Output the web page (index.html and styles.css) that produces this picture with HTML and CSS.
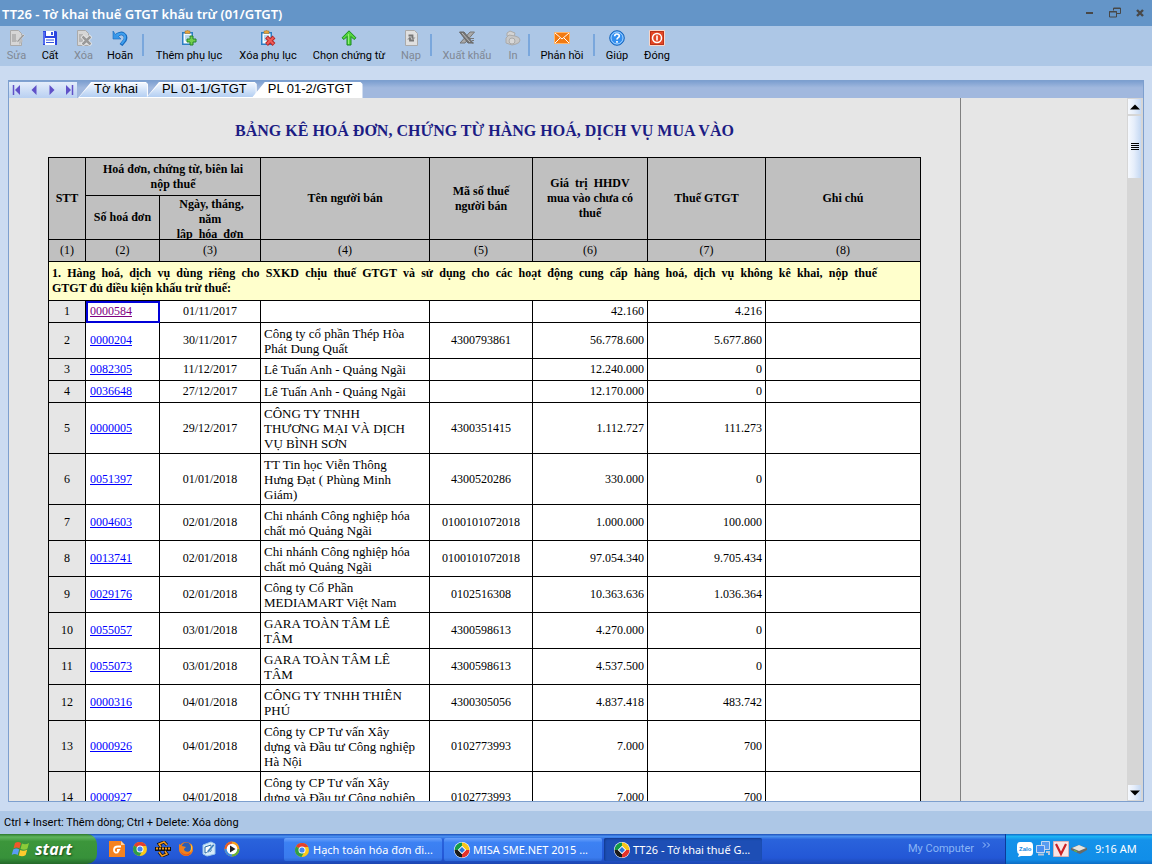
FILE: index.html
```html
<!DOCTYPE html>
<html lang="vi">
<head>
<meta charset="utf-8">
<title>TT26 - Tờ khai thuế GTGT khấu trừ (01/GTGT)</title>
<link rel="stylesheet" href="styles.css">
</head>
<body>
<header class="titlebar">
  <h1 class="titlebar-text">TT26 - Tờ khai thuế GTGT khấu trừ (01/GTGT)</h1>
  <div class="window-controls">
    <button type="button" aria-label="Thu nhỏ"><svg width="12" height="12"><path d="M2 6h7" stroke="#484848" stroke-width="2"/></svg></button>
    <button type="button" aria-label="Khôi phục"><svg width="12" height="12" fill="none" stroke="#484848"><path d="M4.500 3.500V1h7v5.500H7.500M4 1.500h8M.5 4.500h7v5.500h-7zM0 5h8"/></svg></button>
    <button type="button" aria-label="Đóng"><svg width="12" height="12"><path d="M3 3l6 6M9 3L3 9" stroke="#484848" stroke-width="2.400"/></svg></button>
  </div>
</header>
<nav class="toolbar">
  <button type="button" class="tool" disabled>
    <svg width="16" height="16" viewBox="0 0 16 16"><path d="M1.500.5h8l3 3v12h-11z" fill="#d6d6d6" stroke="#aaa"/><path d="M5 10h5V7l4 4-4 4v-3H5z" fill="#bdbdbd"/><path d="M3 4h4v8H3z" fill="#b5b5b5"/><path d="M8 11l6-7 1.500 1.500-6 6.500-2 .5z" fill="#999" stroke="#eee" stroke-width=".5"/></svg>Sửa</button>
  <button type="button" class="tool">
    <svg width="16" height="16" viewBox="0 0 16 16"><path d="M1 1h13l1 1v13H1z" fill="#2a45e0"/><path d="M4 1h8v5H4zM3 8h10v7H3z" fill="#fff"/><path d="M9 2h2v3H9zM4 9.500h8v1H4zM4 12h8v1H4z" fill="#3757dd"/><path d="M2 2v12" stroke="#7a93ff"/></svg>Cất</button>
  <button type="button" class="tool" disabled>
    <svg width="16" height="16" viewBox="0 0 16 16"><path d="M1.500.5h8l3 3v12h-11z" fill="#d6d6d6" stroke="#aaa"/><path d="M3 4h4v8H3z" fill="#b5b5b5"/><path d="M6 6l9 9M15 6l-9 9" stroke="#eee" stroke-width="4"/><path d="M6.500 6.500l8 8M14.500 6.500l-8 8" stroke="#999" stroke-width="2.500"/></svg>Xóa</button>
  <button type="button" class="tool">
    <svg width="16" height="16" viewBox="0 0 16 16"><path d="M5 5.500C10 1 15 5 13 10l-4 5" fill="none" stroke="#1769bd" stroke-width="3.600"/><path d="M1 1v8h8L6.500 6.500 9 3.500 5 3 3.500 4.500z" fill="#3796e8" stroke="#1769bd" stroke-width=".6"/><path d="M5 5.500C10 1 14.500 5 12.500 10l-3 4" fill="none" stroke="#3fa0ef" stroke-width="2"/></svg>Hoãn</button>
  <span class="separator"></span>
  <button type="button" class="tool">
    <svg width="16" height="16" viewBox="0 0 16 16"><path d="M1 2h11v13H1z" fill="#2d7fc4"/><path d="M2.500 3.500h8v10h-8z" fill="#f4fbff"/><path d="M4 1h1.500l1-1 1 1H9v2.500H4z" fill="#e5a43c" stroke="#9b7231" stroke-width=".5"/><path d="M4 6h5M4 8h4M4 10h3" stroke="#7fb5d9"/><path d="M9 6h3v3h3v3h-3v3H9v-3H6V9h3z" fill="#72cf4d" stroke="#23842b"/></svg>Thêm phụ lục</button>
  <button type="button" class="tool">
    <svg width="16" height="16" viewBox="0 0 16 16"><path d="M1 2h11v13H1z" fill="#2d7fc4"/><path d="M2.500 3.500h8v10h-8z" fill="#f4fbff"/><path d="M4 1h1.500l1-1 1 1H9v2.500H4z" fill="#e5a43c" stroke="#9b7231" stroke-width=".5"/><path d="M4 6h5M4 8h4M4 10h3" stroke="#7fb5d9"/><path d="M6.500 7l7.500 7.500M14 7l-7.500 7.500" stroke="#b52727" stroke-width="4"/><path d="M7 7.500l6.500 6.500M13.500 7.500L7 14" stroke="#ef5c58" stroke-width="2"/></svg>Xóa phụ lục</button>
  <button type="button" class="tool">
    <svg width="16" height="16" viewBox="0 0 16 16"><path d="M8 .8l7 7-2 1.700-3-3V15H6V6.500l-3 3-2-1.700z" fill="#55d63d" stroke="#168a1d"/><path d="M7.500 4v10" stroke="#93f179"/></svg>Chọn chứng từ</button>
  <button type="button" class="tool" disabled>
    <svg width="16" height="16" viewBox="0 0 16 16"><path d="M2.500.5h9l3 3v12h-12z" fill="#e0e0e0" stroke="#aaa"/><path d="M5.500 5.500h4v3M11 10.500H7v-3" fill="none" stroke="#777" stroke-width="1.800"/><path d="M6.500 7.500h6L9.500 10.500zM4 9.500h6L7 6.500z" fill="#777" opacity=".7"/></svg>Nạp</button>
  <span class="separator"></span>
  <button type="button" class="tool" disabled>
    <svg width="16" height="16" viewBox="0 0 16 16"><path d="M11 2h4.500L6 13H1z" fill="#aaa" stroke="#777"/><path d="M.5 2H5l9 11H9z" fill="#777" stroke="#666"/><path d="M3 3l8 9" stroke="#bbb"/><path d="M11 8.500h4M13 10.500h2M13 13h2" stroke="#777"/></svg>Xuất khẩu</button>
  <button type="button" class="tool" disabled>
    <svg width="16" height="16" viewBox="0 0 16 16"><path d="M2 3l3-2 5 2-1 4-7-1z" fill="#d4d4d4" stroke="#aaa"/><path d="M1 8l3-3 6 1q5 1 5 4t-4 4l-4 1-6-2z" fill="#c8c8c8" stroke="#aaa"/><circle cx="7" cy="11" r="3" fill="#d8d8d8" stroke="#aaa"/></svg>In</button>
  <span class="separator"></span>
  <button type="button" class="tool">
    <svg width="16" height="16" viewBox="0 0 16 16"><path d="M.5 2.500h15v11H.5z" fill="#f27a12" stroke="#ffb66b"/><path d="M1 3l7 6 7-6M1 13l5-5M15 13l-5-5" fill="none" stroke="#fff"/></svg>Phản hồi</button>
  <span class="separator"></span>
  <button type="button" class="tool">
    <svg width="16" height="16" viewBox="0 0 16 16"><circle cx="8" cy="8" r="7.300" fill="#338ff0" stroke="#1866bb"/><circle cx="8" cy="8" r="6" fill="none" stroke="#a8d5ff"/><path d="M5.700 6.200C5.700 3.300 10.300 3.300 10.300 6c0 1.700-2.300 1.600-2.300 3.500M8 11v1.700" fill="none" stroke="#fff" stroke-width="1.700"/></svg>Giúp</button>
  <button type="button" class="tool">
    <svg width="16" height="16" viewBox="0 0 16 16"><path d="M.5.5h15v15H.5z" fill="#e34624" stroke="#f8d6c9"/><path d="M1.500 1.500h13v13h-13z" fill="none" stroke="#b9321a"/><circle cx="8" cy="8" r="4.500" fill="none" stroke="#fff" stroke-width="1.500"/><path d="M8 5.500v5" stroke="#fff" stroke-width="1.600"/></svg>Đóng</button>
</nav>

<main class="workspace">
  <div class="tabstrip">
    <div class="tab-nav">
      <button type="button" aria-label="Trang đầu"><svg width="10" height="10"><path d="M1.500 0v10" stroke="#6051c8" stroke-width="1.500"/><path d="M8 0v10L3 5z" fill="#6051c8"/></svg></button>
      <button type="button" aria-label="Trang trước"><svg width="10" height="10"><path d="M7.500 0v10l-5-5z" fill="#6051c8"/></svg></button>
      <button type="button" aria-label="Trang sau"><svg width="10" height="10"><path d="M2.500 0v10l5-5z" fill="#6051c8"/></svg></button>
      <button type="button" aria-label="Trang cuối"><svg width="10" height="10"><path d="M8.500 0v10" stroke="#6051c8" stroke-width="1.500"/><path d="M2 0v10l5-5z" fill="#6051c8"/></svg></button>
    </div>
    <div class="tabs" role="tablist">
      <button type="button" class="tab" role="tab"><span>Tờ khai</span></button>
      <button type="button" class="tab" role="tab"><span>PL 01-1/GTGT</span></button>
      <button type="button" class="tab tab-active" role="tab" aria-selected="true"><span>PL 01-2/GTGT</span></button>
    </div>
  </div>
  <div class="viewport">
    <section class="sheet">
      <h2 class="sheet-title">BẢNG KÊ HOÁ ĐƠN, CHỨNG TỪ HÀNG HOÁ, DỊCH VỤ MUA VÀO</h2>
      <table class="ledger">
        <colgroup><col class="w-no"><col class="w-inv"><col class="w-date"><col class="w-seller"><col class="w-tax"><col class="w-value"><col class="w-vat"><col class="w-note"></colgroup>
        <thead>
          <tr class="head-top"><th rowspan="2">STT</th><th colspan="2">Hoá đơn, chứng từ, biên lai<br>nộp thuế</th><th rowspan="2">Tên người bán</th><th rowspan="2">Mã số thuế<br>người bán</th><th rowspan="2">Giá&nbsp; trị&nbsp; HHDV<br>mua vào chưa có<br>thuế</th><th rowspan="2">Thuế GTGT</th><th rowspan="2">Ghi chú</th></tr>
          <tr class="head-sub"><th>Số hoá đơn</th><th><div class="clipped">&nbsp;Ngày, tháng,<br>năm<br>lập&nbsp; hóa&nbsp; đơn</div></th></tr>
          <tr class="head-index"><td>(1)</td><td>(2)</td><td>(3)</td><td>(4)</td><td>(5)</td><td>(6)</td><td>(7)</td><td>(8)</td></tr>
        </thead>
        <tbody>
          <tr class="group"><th colspan="8"><span class="group-line">1. Hàng hoá, dịch vụ dùng riêng cho SXKD chịu thuế GTGT và sử dụng cho các hoạt động cung cấp hàng hoá, dịch vụ không kê khai, nộp thuế</span>GTGT đủ điều kiện khấu trừ thuế:</th></tr>
          <tr class="r1"><td>1</td><td class="current"><a class="visited" href="#">0000584</a></td><td>01/11/2017</td><td></td><td></td><td>42.160</td><td>4.216</td><td></td></tr>
          <tr class="r2"><td>2</td><td><a href="#">0000204</a></td><td>30/11/2017</td><td>Công ty cổ phần Thép Hòa<br>Phát Dung Quất</td><td>4300793861</td><td>56.778.600</td><td>5.677.860</td><td></td></tr>
          <tr class="r1"><td>3</td><td><a href="#">0082305</a></td><td>11/12/2017</td><td>Lê Tuấn Anh - Quảng Ngãi</td><td></td><td>12.240.000</td><td>0</td><td></td></tr>
          <tr class="r1"><td>4</td><td><a href="#">0036648</a></td><td>27/12/2017</td><td>Lê Tuấn Anh - Quảng Ngãi</td><td></td><td>12.170.000</td><td>0</td><td></td></tr>
          <tr class="r3"><td>5</td><td><a href="#">0000005</a></td><td>29/12/2017</td><td>CÔNG TY TNHH<br>THƯƠNG MẠI VÀ DỊCH<br>VỤ BÌNH SƠN</td><td>4300351415</td><td>1.112.727</td><td>111.273</td><td></td></tr>
          <tr class="r3"><td>6</td><td><a href="#">0051397</a></td><td>01/01/2018</td><td>TT Tin học Viễn Thông<br>Hưng Đạt ( Phùng Minh<br>Giám)</td><td>4300520286</td><td>330.000</td><td>0</td><td></td></tr>
          <tr class="r2"><td>7</td><td><a href="#">0004603</a></td><td>02/01/2018</td><td>Chi nhánh Công nghiệp hóa<br>chất mỏ Quảng Ngãi</td><td>0100101072018</td><td>1.000.000</td><td>100.000</td><td></td></tr>
          <tr class="r2"><td>8</td><td><a href="#">0013741</a></td><td>02/01/2018</td><td>Chi nhánh Công nghiệp hóa<br>chất mỏ Quảng Ngãi</td><td>0100101072018</td><td>97.054.340</td><td>9.705.434</td><td></td></tr>
          <tr class="r2"><td>9</td><td><a href="#">0029176</a></td><td>02/01/2018</td><td>Công ty Cổ Phần<br>MEDIAMART Việt Nam</td><td>0102516308</td><td>10.363.636</td><td>1.036.364</td><td></td></tr>
          <tr class="r2"><td>10</td><td><a href="#">0055057</a></td><td>03/01/2018</td><td>GARA TOÀN TÂM LÊ<br>TÂM</td><td>4300598613</td><td>4.270.000</td><td>0</td><td></td></tr>
          <tr class="r2"><td>11</td><td><a href="#">0055073</a></td><td>03/01/2018</td><td>GARA TOÀN TÂM LÊ<br>TÂM</td><td>4300598613</td><td>4.537.500</td><td>0</td><td></td></tr>
          <tr class="r2"><td>12</td><td><a href="#">0000316</a></td><td>04/01/2018</td><td>CÔNG TY TNHH THIÊN<br>PHÚ</td><td>4300305056</td><td>4.837.418</td><td>483.742</td><td></td></tr>
          <tr class="r3"><td>13</td><td><a href="#">0000926</a></td><td>04/01/2018</td><td>Công ty CP Tư vấn Xây<br>dựng và Đầu tư Công nghiệp<br>Hà Nội</td><td>0102773993</td><td>7.000</td><td>700</td><td></td></tr>
          <tr class="r3"><td>14</td><td><a href="#">0000927</a></td><td>04/01/2018</td><td>Công ty CP Tư vấn Xây<br>dựng và Đầu tư Công nghiệp<br>Hà Nội</td><td>0102773993</td><td>7.000</td><td>700</td><td></td></tr>
        </tbody>
      </table>
    </section>
    <div class="scrollbar">
      <button type="button" class="scroll-arrow" aria-label="Cuộn lên"><svg width="10" height="6"><path d="M0 5.500L5 .5l5 5z"/></svg></button>
      <div class="scroll-thumb"><svg width="8" height="8"><path d="M0 .5h8M0 2.500h8M0 4.500h8M0 6.500h8" stroke="#000"/></svg></div>
      <button type="button" class="scroll-arrow scroll-down" aria-label="Cuộn xuống"><svg width="10" height="6"><path d="M0 .5L5 5.500l5-5z"/></svg></button>
    </div>
  </div>
</main>

<div class="statusbar">Ctrl + Insert: Thêm dòng; Ctrl + Delete: Xóa dòng</div>

<footer class="taskbar">
  <button type="button" class="start">
    <svg width="19" height="18" viewBox="0 0 19 18"><path d="M4 3c2-1.500 4-1.500 6 0L8.500 8.500C6.500 7 4.500 7 2.500 8.500z" fill="#f0582a"/><path d="M11 3.500c2 1 4.500 1 7-.5l-1.500 5.500c-2 1.500-4.500 1.500-7 .5z" fill="#8ccc39"/><path d="M2.200 9.500c2-1.500 4-1.500 6 0L6.700 15c-2-1.500-4-1.500-6 0z" fill="#5b9cf4"/><path d="M9.200 10c2 1 4.500 1 7-.5L14.700 15c-2 1.500-4.500 1.500-7 .5z" fill="#ffca2d"/></svg>start</button>
  <div class="quick-launch">
    <button type="button" aria-label="Foxit"><svg width="16" height="16" viewBox="0 0 16 16"><path d="M0 0h12l4 4v12H0z" fill="#f58220"/><path d="M12 0v4h4z" fill="#ffd19e"/><path d="M12 5.500H9C6 5.500 5 7 5 9s1.500 3 3.500 2.500L10 9H8" fill="none" stroke="#fff" stroke-width="1.800"/></svg></button>
    <button type="button" aria-label="Chrome"><svg width="16" height="16" viewBox="0 0 16 16"><circle cx="8" cy="8" r="7" fill="#fbc91b"/><path d="M8 8L2 4.400A7 7 0 0 1 14.200 5H8z" fill="#e3402f"/><path d="M8 8L2 4.400A7 7 0 0 0 7.500 15l3-5.500z" fill="#2f9e48"/><circle cx="8" cy="8" r="3.500" fill="#fff"/><circle cx="8" cy="8" r="2.600" fill="#4285f4"/></svg></button>
    <button type="button" aria-label="Unikey"><svg width="16" height="16" viewBox="0 0 16 16"><path d="M0 6h16v4H0z" fill="#111"/><path d="M1 7.500h14" stroke="#f39b20" stroke-width="2" stroke-dasharray="2 1"/><path d="M12 4L9 1 4 3l2 3M4 11l3 4 5-2-2-3" fill="none" stroke="#111" stroke-width="3"/><path d="M12 4L9 1 4 3l2 3M4 11l3 4 5-2-2-3" fill="none" stroke="#f39b20" stroke-width="1.500"/></svg></button>
    <button type="button" aria-label="Firefox"><svg width="16" height="16" viewBox="0 0 16 16"><circle cx="8" cy="8" r="7" fill="#ef7a1a"/><circle cx="8.500" cy="6.500" r="5" fill="#2a5fb8"/><path d="M1 3l3 2 4 1-2 2c0 3 5 4 7 1 1-3-1-5-2-7 5 2 5 7 2 11-3 3-9 2-11-2-1-3-1-5-1-8z" fill="#f0801c"/><path d="M2 9c2 5 8 6 11 2-1 5-9 5-11-2z" fill="#e2491f"/><path d="M13 3c2 3 1 7-1 8 1-2 1-5 1-8z" fill="#ffcf3b"/></svg></button>
    <button type="button" aria-label="Màn hình nền"><svg width="16" height="16" viewBox="0 0 16 16"><path d="M2 4l8-3 4 2v10l-8 2-4-2z" fill="#d6ebf9" stroke="#9cc8ea"/><path d="M4 6l6-2v6l-6 2z" fill="#fff" stroke="#2c6da5"/><path d="M6 10l6-7 2 1-6 7-2 1z" fill="#3a7fc0" stroke="#fff" stroke-width=".5"/></svg></button>
    <button type="button" aria-label="Media Player"><svg width="16" height="16" viewBox="0 0 16 16"><circle cx="8" cy="8" r="7.500" fill="#f5a21e"/><path d="M8 8V.5A7.500 7.500 0 0 0 .5 8z" fill="#e35d2a"/><path d="M8 8v7.500A7.500 7.500 0 0 1 .5 8z" fill="#3d8ce0"/><path d="M8 8v7.500A7.500 7.500 0 0 0 15.500 8z" fill="#68af36"/><circle cx="8" cy="8" r="5.300" fill="#fff"/><path d="M6 4.500v7L11.500 8z" fill="#222"/></svg></button>
  </div>
  <div class="tasks">
    <button type="button" class="task"><svg width="16" height="16" viewBox="0 0 16 16"><circle cx="8" cy="8" r="7" fill="#fbc91b"/><path d="M8 8L2 4.400A7 7 0 0 1 14.200 5H8z" fill="#e3402f"/><path d="M8 8L2 4.400A7 7 0 0 0 7.500 15l3-5.500z" fill="#2f9e48"/><circle cx="8" cy="8" r="3.500" fill="#fff"/><circle cx="8" cy="8" r="2.600" fill="#4285f4"/></svg>Hạch toán hóa đơn đi...</button>
    <button type="button" class="task"><svg width="16" height="16" viewBox="0 0 16 16"><circle cx="8" cy="8" r="8" fill="#fff"/><path d="M8 .5A7.500 7.500 0 0 0 .5 8H4l4-4z" fill="#139b45"/><path d="M8 .5A7.500 7.500 0 0 1 15.500 8H12L8 4z" fill="#f6c51a"/><path d="M15.500 8A7.500 7.500 0 0 1 8 15.500V12l4-4z" fill="#e4322b"/><path d="M8 15.500A7.500 7.500 0 0 1 .5 8H4l4 4z" fill="#1b1b1b"/><path d="M8 4l4 4-4 4-4-4z" fill="#fff"/><path d="M8 5L11 8 8 11 5 8z" fill="#2878d8"/></svg>MISA SME.NET 2015 ...</button>
    <button type="button" class="task task-active"><svg width="16" height="16" viewBox="0 0 16 16"><circle cx="8" cy="8" r="8" fill="#fff"/><path d="M8 .5A7.500 7.500 0 0 0 .5 8H4l4-4z" fill="#139b45"/><path d="M8 .5A7.500 7.500 0 0 1 15.500 8H12L8 4z" fill="#f6c51a"/><path d="M15.500 8A7.500 7.500 0 0 1 8 15.500V12l4-4z" fill="#e4322b"/><path d="M8 15.500A7.500 7.500 0 0 1 .5 8H4l4 4z" fill="#1b1b1b"/><path d="M8 4l4 4-4 4-4-4z" fill="#fff"/><path d="M8 5L11 8 8 11 5 8z" fill="#2878d8"/></svg>TT26 - Tờ khai thuế G...</button>
  </div>
  <div class="desk-band"><span>My Computer</span><svg width="9" height="6"><path d="M1 .5L3.500 3 1 5.500M5 .5L7.500 3 5 5.500" fill="none" stroke="#9dc4fb"/></svg></div>
  <div class="tray">
    <svg width="16" height="16" viewBox="0 0 16 16"><path d="M3 1h10q3 0 3 4v6q0 4-3 4H4l-3 1 1-3Q0 12 0 9V5q0-4 3-4z" fill="#fff"/><text x="2" y="10" class="tray-zalo">Zalo</text></svg>
    <svg width="16" height="16" viewBox="0 0 16 16"><path d="M6.500.5h8v8h-8z" fill="#5a9df0" stroke="#c4d8f0"/><path d="M1.500 4.500h8v7h-8z" fill="#4a8ff0" stroke="#c4d8f0"/><path d="M3 13.500h6M11 11h3v3" stroke="#b9c6d8" stroke-width="2" fill="none"/></svg>
    <svg width="16" height="16" viewBox="0 0 16 16"><path d="M.5.5h15v15H.5z" fill="#f7e6e6" stroke="#d8b4b4"/><path d="M3 3l5 10 5-10" fill="none" stroke="#c92227" stroke-width="2.200"/></svg>
    <svg width="16" height="16" viewBox="0 0 16 16"><path d="M0 7l8-3 8 3v2l-7 4-9-4z" fill="#6a6a66"/><path d="M1 7l7-3 7 3-7 3z" fill="#e4e4e0"/><path d="M3 9.500l3 1" stroke="#65c844"/></svg>
    <span class="clock">9:16 AM</span>
  </div>
</footer>
</body>
</html>
```
FILE: styles.css
```css
* { box-sizing: border-box; }
body {
  margin: 0;
  height: 100vh;
  display: flex;
  flex-direction: column;
  overflow: hidden;
  background: #cbdbf1;
  color: #000;
  font: 11px/14px "Noto Sans", sans-serif;
}
button {
  margin: 0;
  padding: 0;
  border: 0;
  background: none;
  color: inherit;
  font: inherit;
}
svg { flex: none; display: block; }

.titlebar {
  flex: none;
  height: 26px;
  display: flex;
  align-items: center;
  justify-content: space-between;
  padding: 0 6px 0 2px;
  background: #6495c8;
}
.titlebar-text {
  margin: 0;
  padding-top: 2px;
  color: #fff;
  font-size: 13px;
  font-weight: 600;
  line-height: 18px;
}
.window-controls { display: flex; gap: 13px; }

.toolbar {
  flex: none;
  height: 40px;
  display: grid;
  grid-template-columns: 33px 34px 33px 40px 6px 86px 72px 90px 34px 6px 66px 26px 6px 60px 4px 42px 38px;
  padding-top: 4px;
  background: #adc7e6;
}
.toolbar, .statusbar { font-family: Roboto, "Noto Sans", sans-serif; }
.tool {
  display: flex;
  flex-direction: column;
  align-items: center;
  gap: 3px;
  height: 34px;
  white-space: nowrap;
}
.tool:disabled { color: #808894; }
.separator {
  justify-self: center;
  width: 2px;
  height: 22px;
  margin-top: 4px;
  background: #7aa7dc;
}

.workspace {
  flex: 1;
  min-height: 0;
  display: flex;
  flex-direction: column;
  margin: 14px 8px 9px;
  border: 1px solid #7d9fce;
}
.tabstrip {
  flex: none;
  height: 17px;
  display: flex;
  align-items: flex-end;
  background: linear-gradient(#7c9fd0, #a1b8de 40%);
}
.tab-nav {
  display: flex;
  align-items: center;
  justify-content: space-between;
  width: 68px;
  height: 16px;
  padding: 0 3px;
  background: linear-gradient(#e4edfb, #b9d0f1);
}
.tabs { display: flex; padding-left: 1px; font: 13px/14px "Liberation Sans", sans-serif; }
.tab {
  position: relative;
  height: 16px;
  padding: 0 10px 2px 16px;
  margin-right: -5px;
  background: #fff;
  clip-path: polygon(0 100%, 13px 0, calc(100% - 2px) 0, 100% 2px, 100% 100%);
}
.tab:first-child { margin-right: -2px; }
.tab::before {
  content: "";
  position: absolute;
  inset: 1px;
  background: linear-gradient(#f2f7ff, #b4cff2);
  clip-path: polygon(0 100%, 13px 0, 100% 0, 100% 100%);
}
.tab-active::before { background: #fff; }
.tab span { position: relative; }

.viewport {
  flex: 1;
  min-height: 0;
  display: flex;
  justify-content: space-between;
  background: #e6e6e6;
}
.sheet {
  width: 952px;
  overflow: hidden;
  padding: 23px 0 0 39px;
  border-right: 1px solid #808080;
  font: 12px/15px "Liberation Serif", serif;
}
.sheet-title {
  width: 873px;
  margin: 0 0 17px;
  color: #1c1c84;
  font-size: 16px;
  line-height: 19px;
  text-align: center;
}
.ledger {
  width: 873px;
  table-layout: fixed;
  border-collapse: collapse;
  background: #fff;
}
.w-no { width: 37px; }
.w-inv { width: 74px; }
.w-date { width: 101px; }
.w-seller { width: 169px; }
.w-tax { width: 103px; }
.w-value { width: 115px; }
.w-vat { width: 118px; }
.w-note { width: 155px; }
.ledger th, .ledger td {
  padding: 0 3px;
  border: 1px solid #000;
  text-align: center;
  white-space: nowrap;
}
.ledger thead { background: #c0c0c0; }
.head-top { height: 38px; }
.head-sub { height: 44px; }
.clipped { height: 42px; overflow: hidden; }
.head-index { height: 22px; }
.group { height: 39px; background: #ffc; }
.ledger .group th { text-align: left; padding-right: 43px; }
.group-line { display: block; text-align: justify; text-align-last: justify; }
.r1 { height: 22px; }
.r2 { height: 36px; }
.r3 { height: 51px; }
.ledger tbody td:first-child { background: #e6e6e6; }
.ledger tbody td:nth-child(2) { text-align: left; padding-left: 4px; }
.ledger tbody td:nth-child(4) { text-align: left; font-size: 13px; }
.ledger tbody td:nth-child(6), .ledger tbody td:nth-child(7) { text-align: right; }
.ledger a { color: #00f; }
.ledger .visited { color: #800080; }
.current { outline: 2px solid #0000d8; outline-offset: -2px; }

.scrollbar {
  width: 16px;
  display: flex;
  flex-direction: column;
  gap: 2px;
  padding: 1px 2px 1px 1px;
  background: #d6d6d6;
}
.scroll-arrow, .scroll-thumb {
  display: flex;
  align-items: center;
  justify-content: center;
  height: 15px;
  background: linear-gradient(90deg, #f6f9fe, #e6eefb 45%, #c4d8f3);
}
.scroll-thumb { height: 62px; }
.scroll-down { margin-top: auto; }

.statusbar {
  flex: none;
  height: 23px;
  padding: 5px 4px;
  background: #adc7e6;
}

.taskbar {
  flex: none;
  height: 30px;
  display: flex;
  align-items: stretch;
  background: linear-gradient(#1d4fb8, #4a90f0 8%, #2a63dc 18%, #2357d6 80%, #1c46b0);
  color: #fff;
}
.start {
  width: 97px;
  display: flex;
  align-items: center;
  gap: 5px;
  padding-left: 11px;
  border-radius: 0 10px 10px 0;
  background: linear-gradient(#2c7a2c, #5fb45d 10%, #3c963b 25%, #37913a 80%, #24682a);
  font: italic bold 16px/20px "Open Sans", sans-serif;
  text-shadow: 1px 1px 2px #174b19;
}
.quick-launch { display: flex; align-items: center; gap: 7px; padding-left: 12px; }
.tasks { flex: 1; display: flex; gap: 2px; padding: 4px 0 3px 44px; }
.task {
  flex: 0 1 158px;
  display: flex;
  align-items: center;
  gap: 3px;
  padding-left: 10px;
  border-radius: 2px;
  background: linear-gradient(#6ba2fb, #3c81f3 20%, #3a7bee 85%, #2e69d6);
  white-space: nowrap;
}
.task-active { background: #1d4eb5; box-shadow: inset 1px 1px 2px #12398c; }
.desk-band { display: flex; gap: 8px; padding: 8px 14px 0 0; color: #8ab5f5; font-family: Roboto, sans-serif; }
.tray {
  width: 147px;
  display: flex;
  align-items: center;
  gap: 2px;
  padding-left: 11px;
  border-left: 1px solid #0c3a99;
  background: linear-gradient(#0f6bc8, #1fb5f4 8%, #1492ea 20%, #118ee8 85%, #0d6dc4);
}
.tray-zalo { fill: #1686e0; font: bold 6px "Liberation Sans", sans-serif; }
.clock { margin-left: 6px; }
```
